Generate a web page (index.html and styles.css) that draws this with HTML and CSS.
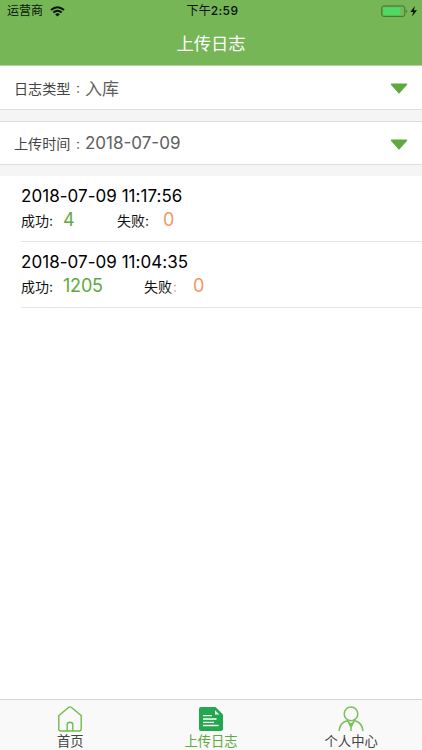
FILE: index.html
```html
<!DOCTYPE html>
<html lang="zh-CN">
<head>
<meta charset="utf-8">
<title>上传日志</title>
<link rel="stylesheet" href="styles.css">
</head>
<body>
<div class="app">
  <header class="header">
    <div class="status">
      <div class="carrier">
        <span>运营商</span>
        <svg width="15" height="11" viewBox="0 0 15 11" fill="none" stroke="#07120a" stroke-width="2">
          <path d="M1 4.1Q7.5-1.5 14 4.1M3.3 6.6Q7.5 3 11.7 6.6"/>
          <path d="M5.1 8.2Q7.5 6.2 9.9 8.2L7.5 10.6Z" fill="#07120a" stroke="none"/>
        </svg>
      </div>
      <div class="clock">下午<b>2:59</b></div>
      <svg class="battery" width="37" height="13" viewBox="0 0 37 13">
        <rect x=".8" y="1" width="23" height="10.4" rx="2" fill="none" stroke="#3f7130" stroke-width="1"/>
        <rect x="2.3" y="2.5" width="17" height="7.4" rx=".7" fill="#4cdc66"/>
        <path d="M25.3 4.4Q27.4 6.2 25.3 8Z" fill="#3f7130"/>
        <path d="M33.8 1L29.3 7H32.2L31 11.6L36 5.2H33Z" fill="#07120a"/>
      </svg>
    </div>
    <h1>上传日志</h1>
  </header>
  <section class="filters">
    <div class="filter">
      <span class="label">日志类型</span><span class="colon">:</span><span class="value">入库</span>
      <svg class="arrow" width="18" height="11" viewBox="0 0 18 11"><path d="M1.4 1.2H16.6L9 9.8Z" fill="#60a93e" stroke="#60a93e" stroke-width="1.4" stroke-linejoin="round"/></svg>
    </div>
    <div class="filter">
      <span class="label">上传时间</span><span class="colon">:</span><span class="value">2018-07-09</span>
      <svg class="arrow" width="18" height="11" viewBox="0 0 18 11"><path d="M1.4 1.2H16.6L9 9.8Z" fill="#60a93e" stroke="#60a93e" stroke-width="1.4" stroke-linejoin="round"/></svg>
    </div>
  </section>
  <main class="list">
    <article class="log">
      <div class="time">2018-07-09 11:17:56</div>
      <div class="counts"><span class="name">成功:</span><span class="ok short">4</span><span class="name">失败:</span><span class="fail">0</span></div>
    </article>
    <article class="log">
      <div class="time">2018-07-09 11:04:35</div>
      <div class="counts"><span class="name">成功:</span><span class="ok long">1205</span><span class="name wide">失败<i>:</i></span><span class="fail">0</span></div>
    </article>
  </main>
  <nav class="tabs">
    <div class="tab">
      <svg width="26" height="26" viewBox="0 0 26 26" fill="none" stroke="#6dbb4b" stroke-width="1.4" stroke-linejoin="round">
        <path d="M1 10.2L11.8 1.3Q13 .4 14.2 1.3L25 10.2M1.8 9.8V23Q1.8 25 3.8 25H22.2Q24.2 25 24.2 23V9.8M10.2 25V18.6Q10.2 16.2 13 16.2T15.8 18.6V25"/>
      </svg>
      <span>首页</span>
    </div>
    <div class="tab active">
      <svg width="26" height="26" viewBox="0 0 26 26">
        <path d="M3 1H17.5L25 8.5V23Q25 25 23 25H3Q1 25 1 23V3Q1 1 3 1Z" fill="#23a84f"/>
        <path d="M17 4.2V8.5H21.3Z" fill="#fff"/>
        <path d="M5 9.7H14M5 13H18.5M5 16.3H16M5 19.5H20.5" stroke="#fff" stroke-width="1.3"/>
      </svg>
      <span>上传日志</span>
    </div>
    <div class="tab">
      <svg width="26" height="26" viewBox="0 0 26 26" fill="none" stroke="#79c15c" stroke-width="1.5">
        <circle cx="13" cy="7.9" r="6.8"/>
        <path d="M1 25Q2 16.5 9.2 14.8L13 18.6L16.8 14.8Q24 16.5 25 25M10.5 16.3L13 21.5L15.5 16.3M11.3 17.8H14.7M13 21V25"/>
      </svg>
      <span>个人中心</span>
    </div>
  </nav>
</div>
</body>
</html>
```
FILE: styles.css
```css
* { box-sizing: border-box; }
body { margin: 0; background: #fff; font-family: Inter, "Noto Sans CJK SC", sans-serif; color: #111; }
svg { display: block; flex: none; }
.app { height: 750px; display: flex; flex-direction: column; }
.header { height: 66px; background: #76b657; border-bottom: 1px solid #b5d5a6; flex: none; }
.status { height: 22px; padding: 0 4px 0 7px; display: grid; grid-template-columns: 1fr auto 1fr; align-items: center; font-size: 12px; line-height: 22px; color: #07120a; }
.carrier { display: flex; align-items: center; gap: 7px; }
.clock { letter-spacing: .1px; }
.clock b { font-weight: 500; letter-spacing: .4px; }
.battery { justify-self: end; }
h1 { margin: 0; height: 43px; line-height: 43px; text-align: center; color: #fff; font-size: 17.3px; font-weight: 400; }
.filters { background: #f5f5f5; height: 110px; flex: none; display: flex; flex-direction: column; gap: 11px; }
.filter { height: 44px; display: flex; align-items: center; padding: 0 14px; background: #fff; border-bottom: 1px solid #dedede; color: #555; }
.filter + .filter { border-top: 1px solid #dedede; }
.label { font-size: 14.1px; color: #444; width: 62px; white-space: nowrap; }
.colon { font-size: 14px; width: 9px; }
.value { font-size: 17px; color: #606060; }
.arrow { margin-left: auto; margin-top: 2px; }
.list { flex: 1; }
.log { height: 66px; margin-left: 21px; padding-top: 8px; border-bottom: 1px solid #e5e5e8; }
.time { font-size: 17px; line-height: 24px; height: 23px; letter-spacing: .04px; color: #000; }
.counts { display: flex; align-items: center; height: 26px; line-height: 26px; }
.name { font-size: 14px; width: 42px; padding-top: 1px; white-space: nowrap; }
.wide { width: 45px; }
.name i { color: #f29b70; font-style: normal; margin-left: 1px; }
.ok, .fail { font-size: 18px; line-height: 24px; }
.ok { color: #60a93e; }
.short { width: 54px; }
.long { width: 81px; letter-spacing: -.2px; }
.fail { color: #f49662; margin-left: 4px; }
.tabs { height: 51px; flex: none; display: grid; grid-template-columns: repeat(3, 1fr); background: #f9f9f9; border-top: 1px solid #d5d5d5; }
.tab { display: flex; flex-direction: column; align-items: center; padding-top: 6px; font-size: 13.3px; line-height: 18px; color: #444; }
.tab:last-child { padding-right: 1px; }
.active { color: #60a93e; }
```
